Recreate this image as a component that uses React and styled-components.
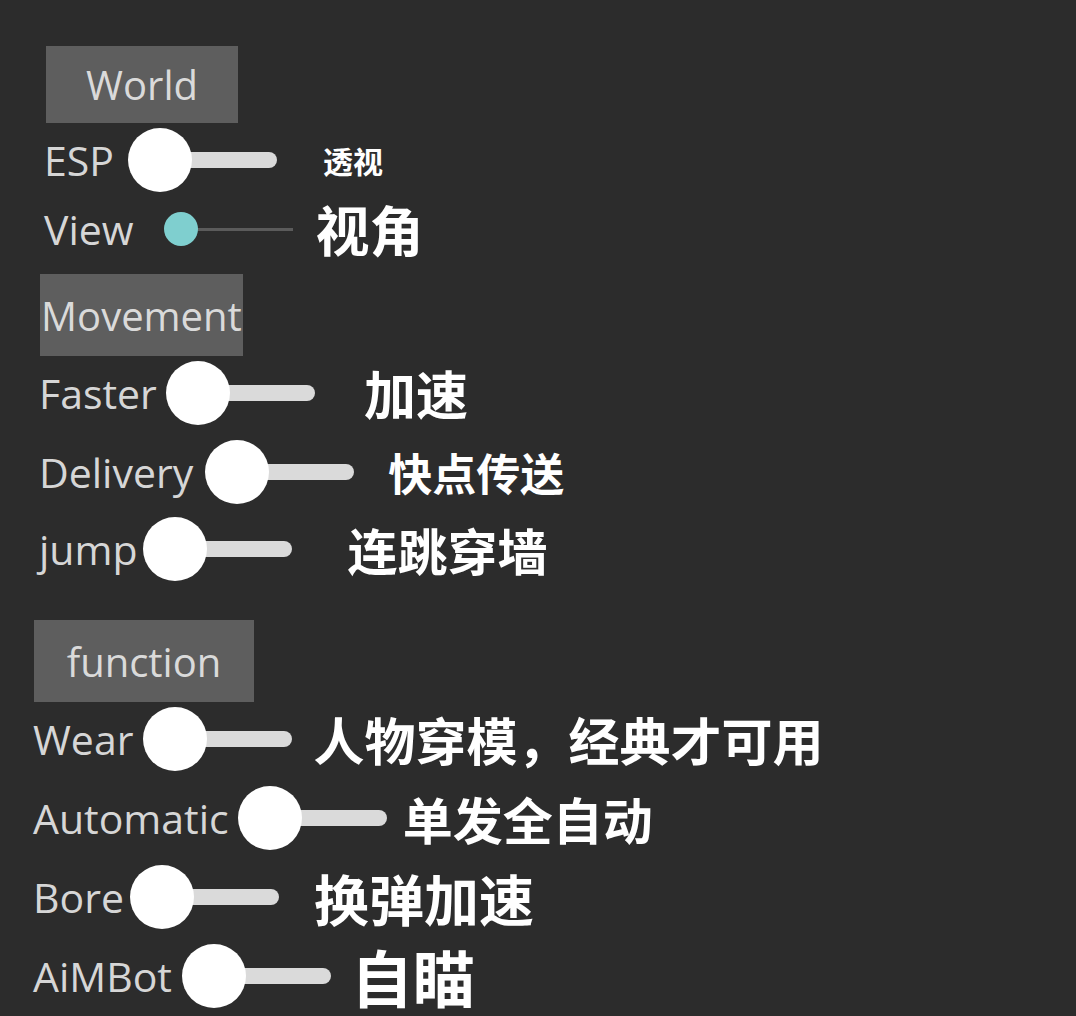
import React from "react"
import styled, { createGlobalStyle } from "styled-components"

const GlobalStyle = createGlobalStyle`
    html, body {
        margin: 0;
        padding: 0;
        background-color: #2c2c2c;
    }
    body {
        font-family: "Open Sans", "Noto Sans", sans-serif;
    }
`

const Page = styled.div`
    display: flex;
    flex-direction: column;
    min-height: 100vh;
    padding-top: 46px;
    box-sizing: border-box;
    background-color: #2c2c2c;
`

const Section = styled.section`
    display: flex;
    flex-direction: column;
    align-items: flex-start;
    padding-left: ${p => p.$left}px;
    margin-top: ${p => p.$mt || 0}px;
`

const Header = styled.div`
    display: flex;
    justify-content: center;
    align-items: center;
    width: ${p => p.$w}px;
    height: ${p => p.$h}px;
    margin-left: ${p => p.$offset || 0}px;
    background-color: #5e5e5e;
    color: #dadada;
    font-size: 40px;
    white-space: nowrap;
`

const Row = styled.div`
    display: flex;
    align-items: center;
    height: 64px;
    margin-top: ${p => p.$mt}px;
`

const Label = styled.span`
    color: #d6d6d6;
    font-size: 41px;
    margin-right: ${p => p.$gap ?? 8}px;
    white-space: nowrap;
`

// big white switch: knob on the left, pill track running off to the right
const Switch = styled.div`
    position: relative;
    flex: none;
    width: 149px;
    height: 64px;
    &::before {
        content: "";
        position: absolute;
        left: 32px;
        right: 0;
        top: 24px;
        height: 16px;
        border-radius: 8px;
        background-color: #dadada;
    }
    &::after {
        content: "";
        position: absolute;
        left: 0;
        top: 0;
        width: 64px;
        height: 64px;
        border-radius: 50%;
        background-color: #ffffff;
    }
`

// thin slider with the small teal thumb
const Slider = styled.div`
    position: relative;
    flex: none;
    width: 129px;
    height: 34px;
    margin-left: ${p => p.$offset}px;
    &::before {
        content: "";
        position: absolute;
        left: 17px;
        right: 0;
        top: 16px;
        height: 3px;
        background-color: #5b5b5b;
    }
    &::after {
        content: "";
        position: absolute;
        left: 0;
        top: 0;
        width: 34px;
        height: 34px;
        border-radius: 50%;
        background-color: #7fcfcf;
    }
`

const Note = styled.span`
    margin-left: ${p => p.$gap}px;
    color: #ffffff;
    font-family: "Noto Sans CJK SC", "Noto Sans", sans-serif;
    font-weight: 700;
    font-size: ${p => p.$size}px;
    line-height: 1;
    white-space: nowrap;
`

const world = [
    { label: "ESP", note: "透视", size: 30, gap: 46, mt: 5, labelGap: 14 },
]

const movement = [
    { label: "Faster", note: "加速", size: 52, gap: 49, mt: 5, labelGap: 9 },
    { label: "Delivery", note: "快点传送", size: 44, gap: 34, mt: 15, labelGap: 12 },
    { label: "jump", note: "连跳穿墙", size: 50, gap: 56, mt: 13, labelGap: 5 },
]

const functions = [
    { label: "Wear", note: "人物穿模，经典才可用", size: 51, gap: 21, mt: 5, labelGap: 10 },
    { label: "Automatic", note: "单发全自动", size: 50, gap: 16, mt: 15, labelGap: 9 },
    { label: "Bore", note: "换弹加速", size: 55, gap: 35, mt: 15, labelGap: 6 },
    { label: "AiMBot", note: "自瞄", size: 62, gap: 20, mt: 15, labelGap: 10 },
]

const ToggleRow = ({ item }) => (
    <Row $mt={item.mt}>
        <Label $gap={item.labelGap}>{item.label}</Label>
        <Switch />
        <Note $size={item.size} $gap={item.gap}>{item.note}</Note>
    </Row>
)

const App = () => {
    return (
        <Page>
            <GlobalStyle />
            <Section $left={44}>
                <Header $w={192} $h={77} $offset={2}>World</Header>
                {world.map(item => <ToggleRow key={item.label} item={item} />)}
                <Row $mt={5}>
                    <Label $gap={0}>View</Label>
                    <Slider $offset={30} />
                    <Note $size={54} $gap={23}>视角</Note>
                </Row>
            </Section>

            <Section $left={39} $mt={13}>
                <Header $w={203} $h={82} $offset={1}>Movement</Header>
                {movement.map(item => <ToggleRow key={item.label} item={item} />)}
            </Section>

            <Section $left={33} $mt={39}>
                <Header $w={220} $h={82} $offset={1}>function</Header>
                {functions.map(item => <ToggleRow key={item.label} item={item} />)}
            </Section>
        </Page>
    )
}

export default App
